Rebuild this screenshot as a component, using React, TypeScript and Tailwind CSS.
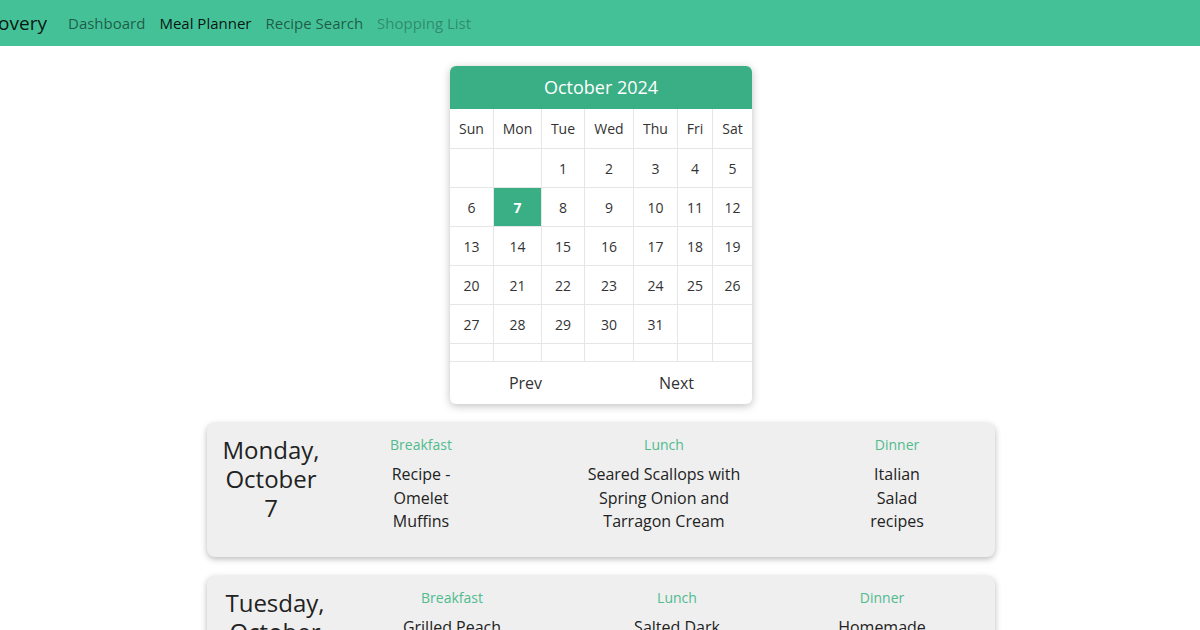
import React from 'react';

const WEEKDAYS = ['Sun', 'Mon', 'Tue', 'Wed', 'Thu', 'Fri', 'Sat'];
const COL_W = ['w-[44px]', 'w-[48px]', 'w-[43px]', 'w-[49px]', 'w-[44px]', 'w-[35px]', 'w-[39px]'];

// October 2024 starts on a Tuesday
const WEEKS: (number | null)[][] = [
  [null, null, 1, 2, 3, 4, 5],
  [6, 7, 8, 9, 10, 11, 12],
  [13, 14, 15, 16, 17, 18, 19],
  [20, 21, 22, 23, 24, 25, 26],
  [27, 28, 29, 30, 31, null, null],
  [null, null, null, null, null, null, null],
];

const SELECTED = 7;

interface Meal {
  label: string;
  lines: string[];
  box: string;
}

interface DayPlan {
  date: string[];
  dateBox: string;
  meals: Meal[];
}

const DAYS: DayPlan[] = [
  {
    date: ['Monday,', 'October', '7'],
    dateBox: 'ml-[9px] w-[110px]',
    meals: [
      { label: 'Breakfast', lines: ['Recipe -', 'Omelet', 'Muffins'], box: 'ml-[55px] w-[80px]' },
      { label: 'Lunch', lines: ['Seared Scallops with', 'Spring Onion and', 'Tarragon Cream'], box: 'ml-[113px] w-[180px]' },
      { label: 'Dinner', lines: ['Italian', 'Salad', 'recipes'], box: 'ml-[108px] w-[70px]' },
    ],
  },
  {
    date: ['Tuesday,', 'October', '8'],
    dateBox: 'ml-[8px] w-[120px]',
    meals: [
      { label: 'Breakfast', lines: ['Grilled Peach', 'and Ricotta', 'Toast'], box: 'ml-[57px] w-[120px]' },
      { label: 'Lunch', lines: ['Salted Dark', 'Chocolate', 'Tart'], box: 'ml-[110px] w-[110px]' },
      { label: 'Dinner', lines: ['Homemade', 'Pizza'], box: 'ml-[95px] w-[110px]' },
    ],
  },
  {
    date: ['Wednesday,', 'October', '9'],
    dateBox: 'ml-[8px] w-[140px]',
    meals: [
      { label: 'Breakfast', lines: ['Banana', 'Pancakes'], box: 'ml-[40px] w-[110px]' },
      { label: 'Lunch', lines: ['Chicken Caesar', 'Wrap'], box: 'ml-[100px] w-[140px]' },
      { label: 'Dinner', lines: ['Beef', 'Stroganoff'], box: 'ml-[90px] w-[110px]' },
    ],
  },
];

function NavBar() {
  return (
    <nav className="h-[46px] bg-[#44c197] flex items-center">
      <div className="w-[47px] flex justify-end overflow-hidden whitespace-nowrap text-[19px] font-medium text-black/90">
        Meal Discovery
      </div>
      <div className="ml-[14px] flex items-center text-[15px]">
        <a className="px-[7px] text-black/55">Dashboard</a>
        <a className="px-[7px] text-black/90">Meal Planner</a>
        <a className="px-[7px] text-black/55">Recipe Search</a>
        <a className="px-[7px] text-black/30">Shopping List</a>
      </div>
    </nav>
  );
}

function Calendar() {
  return (
    <div className="mx-auto mt-5 w-[302px] rounded-md bg-white shadow-[0_2px_8px_rgba(0,0,0,0.25)] overflow-hidden">
      <div className="h-[43px] bg-[#3aae85] flex items-center justify-center text-[18px] text-white">
        October 2024
      </div>
      <div className="flex">
        {WEEKDAYS.map((d, i) => (
          <div
            key={d}
            className={`${COL_W[i]} h-[40px] flex items-center justify-center border-b border-[#e6e6e6] text-[14px] text-[#333] ${i < 6 ? 'border-r' : ''}`}
          >
            {d}
          </div>
        ))}
      </div>
      {WEEKS.map((week, w) => {
        const empty = week.every((d) => d === null);
        return (
          <div key={w} className="flex">
            {week.map((d, i) => (
              <div
                key={i}
                className={`${COL_W[i]} ${empty ? 'h-[18px]' : 'h-[39px]'} flex items-center justify-center border-b border-[#e6e6e6] text-[14px] ${i < 6 ? 'border-r' : ''} ${d === SELECTED ? 'bg-[#3aae85] text-white font-bold' : 'text-[#333]'}`}
              >
                {d}
              </div>
            ))}
          </div>
        );
      })}
      <div className="h-[42px] flex text-[16px] text-[#333]">
        <button className="flex-1 flex items-center justify-center">Prev</button>
        <button className="flex-1 flex items-center justify-center">Next</button>
      </div>
    </div>
  );
}

function DayCard({ day }: { day: DayPlan }) {
  return (
    <div className="flex items-start bg-[#efefef] rounded-lg shadow-[0_2px_6px_rgba(0,0,0,0.28)] pt-3 pb-[23px] mb-[19px]">
      <div className={`${day.dateBox} text-center text-[24px] leading-[29px] font-medium text-[#222]`}>
        {day.date.map((l) => (
          <div key={l}>{l}</div>
        ))}
      </div>
      {day.meals.map((m) => (
        <div key={m.label} className={`${m.box} text-center`}>
          <div className="text-[14px] leading-[20px] text-[#4fbb8e]">{m.label}</div>
          <div className="mt-2 text-[16px] leading-[23.5px] text-[#222]">
            {m.lines.map((l) => (
              <div key={l}>{l}</div>
            ))}
          </div>
        </div>
      ))}
    </div>
  );
}

export default function App() {
  return (
    <div className="min-h-screen bg-white font-['Open_Sans',sans-serif]">
      <NavBar />
      <main className="pl-[2px]">
        <Calendar />
        <div className="mx-auto mt-[19px] w-[788px]">
          {DAYS.map((d) => (
            <DayCard key={d.date.join(' ')} day={d} />
          ))}
        </div>
      </main>
    </div>
  );
}
